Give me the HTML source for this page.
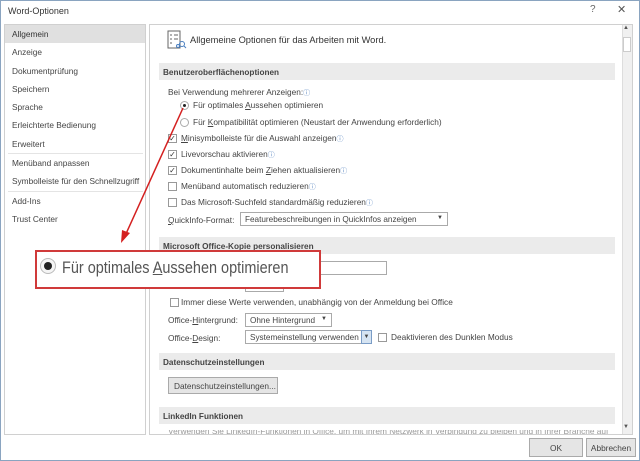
<!DOCTYPE html>
<html><head><meta charset="utf-8"><style>
*{margin:0;padding:0;box-sizing:border-box}
body{width:640px;height:461px;overflow:hidden;background:#fff;font-family:"Liberation Sans",sans-serif;font-size:8.3px;color:#444;position:relative}
.a{position:absolute;white-space:nowrap}
.frame{position:absolute;left:0;top:0;width:640px;height:461px;border:1px solid #8aa4c0}
.nav div.i{position:absolute;left:12px}
.hdr{position:absolute;left:159px;width:456px;height:17px;background:#ebebeb;font-weight:bold;font-size:8.2px;padding:5px 0 0 4px;color:#444}
.cb{position:absolute;width:9px;height:9px;border:1px solid #999;background:#fff;font-size:8px;line-height:7px;text-align:center;color:#333}
.sel{position:absolute;height:14px;border:1px solid #aaa;background:#fff;padding:2px 0 0 4px;font-size:8.2px}
.info{font-size:7px;color:#5a86c0}
</style></head><body>
<div class="frame"></div>
<div class="a" style="left:8px;top:6px;font-size:9px;color:#333">Word-Optionen</div>
<div class="a" style="left:590px;top:4px;font-size:10px;color:#666">?</div>
<div class="a" style="left:617px;top:3px;font-size:11px;color:#555">✕</div>
<div class="a" style="left:4px;top:24px;width:142px;height:411px;border:1px solid #d0d0d0;background:#fff"></div>
<div class="a" style="left:5px;top:25px;width:140px;height:18px;background:#e0e0e0"></div>
<div class="nav" style="position:absolute;left:0;top:0">
<div class="i a" style="top:29px;color:#333">Allgemein</div>
<div class="i a" style="top:47px">Anzeige</div>
<div class="i a" style="top:66px">Dokumentprüfung</div>
<div class="i a" style="top:84px">Speichern</div>
<div class="i a" style="top:102px">Sprache</div>
<div class="i a" style="top:120px">Erleichterte Bedienung</div>
<div class="i a" style="top:139px">Erweitert</div>
<div class="i a" style="top:158px">Menüband anpassen</div>
<div class="i a" style="top:176px">Symbolleiste für den Schnellzugriff</div>
<div class="i a" style="top:196px">Add-Ins</div>
<div class="i a" style="top:214px">Trust Center</div>
</div>
<div class="a" style="left:8px;top:153px;width:135px;height:1px;background:#e4e4e4"></div>
<div class="a" style="left:8px;top:191px;width:135px;height:1px;background:#e4e4e4"></div>
<div class="a" style="left:149px;top:24px;width:484px;height:411px;border:1px solid #d0d0d0"></div>
<div class="a" style="left:622px;top:25px;width:10px;height:409px;background:#f0f0f0;border-left:1px solid #ddd"></div>
<div class="a" style="left:623px;top:37px;width:8px;height:15px;background:#fff;border:1px solid #ccc"></div>
<div class="a" style="left:623px;top:25px;font-size:6px;color:#555">▲</div>
<div class="a" style="left:623px;top:424px;font-size:6px;color:#555">▼</div>
<svg class="a" style="left:167px;top:30px" width="20" height="22" viewBox="0 0 20 22"><rect x="1" y="1" width="12" height="17" fill="none" stroke="#666"/><path d="M3 5h2M7 5h4M3 9h2M7 9h4M3 13h2" stroke="#666"/><circle cx="15" cy="14" r="2.5" fill="none" stroke="#4a7fc0"/><path d="M17 16l2 2" stroke="#4a7fc0"/><circle cx="11" cy="16" r="1.5" fill="none" stroke="#4a7fc0"/></svg>
<div class="a" style="left:190px;top:35px;font-size:9.3px;color:#333">Allgemeine Optionen für das Arbeiten mit Word.</div>
<div class="hdr" style="top:63px">Benutzeroberflächenoptionen</div>
<div class="a" style="left:168px;top:87px">Bei Verwendung mehrerer Anzeigen:<span class="info">ⓘ</span></div>
<div class="a" style="left:180px;top:101px;width:9px;height:9px;border-radius:50%;border:1px solid #aaa;background:#fff"><div style="position:absolute;left:2px;top:2px;width:3px;height:3px;border-radius:50%;background:#222"></div></div>
<div class="a" style="left:193px;top:100px">Für optimales <u>A</u>ussehen optimieren</div>
<div class="a" style="left:180px;top:118px;width:9px;height:9px;border-radius:50%;border:1px solid #aaa;background:#fff"></div>
<div class="a" style="left:193px;top:117px">Für <u>K</u>ompatibilität optimieren (Neustart der Anwendung erforderlich)</div>
<div class="cb" style="left:168px;top:134px">✓</div><div class="a" style="left:181px;top:133px"><u>M</u>inisymbolleiste für die Auswahl anzeigen<span class="info">ⓘ</span></div>
<div class="cb" style="left:168px;top:150px">✓</div><div class="a" style="left:181px;top:149px">Livevorschau aktivieren<span class="info">ⓘ</span></div>
<div class="cb" style="left:168px;top:166px">✓</div><div class="a" style="left:181px;top:165px">Dokumentinhalte beim <u>Z</u>iehen aktualisieren<span class="info">ⓘ</span></div>
<div class="cb" style="left:168px;top:182px"></div><div class="a" style="left:181px;top:181px">Menüband automatisch reduzieren<span class="info">ⓘ</span></div>
<div class="cb" style="left:168px;top:198px"></div><div class="a" style="left:181px;top:197px">Das Microsoft-Suchfeld standardmäßig reduzieren<span class="info">ⓘ</span></div>
<div class="a" style="left:168px;top:215px"><u>Q</u>uickInfo-Format:</div>
<div class="sel" style="left:240px;top:212px;width:208px">Featurebeschreibungen in QuickInfos anzeigen<span style="position:absolute;right:4px;top:2px;font-size:6px">▼</span></div>
<div class="hdr" style="top:237px">Microsoft Office-Kopie personalisieren</div>
<div class="a" style="left:245px;top:261px;width:142px;height:14px;border:1px solid #aaa"></div>
<div class="a" style="left:245px;top:280px;width:39px;height:12px;border:1px solid #aaa"></div>
<div class="cb" style="left:170px;top:298px"></div><div class="a" style="left:181px;top:297px">Immer diese Werte verwenden, unabhängig von der Anmeldung bei Office</div>
<div class="a" style="left:168px;top:315px">Office-<u>H</u>intergrund:</div>
<div class="sel" style="left:245px;top:313px;width:87px">Ohne Hintergrund<span style="position:absolute;right:4px;top:2px;font-size:6px">▼</span></div>
<div class="a" style="left:168px;top:333px">Office-<u>D</u>esign:</div>
<div class="sel" style="left:245px;top:330px;width:127px">Systemeinstellung verwenden<span style="position:absolute;right:-1px;top:-1px;width:11px;height:14px;background:#d6e4f2;border:1px solid #7a9cc6;font-size:6px;text-align:center;line-height:12px">▼</span></div>
<div class="cb" style="left:378px;top:333px"></div><div class="a" style="left:391px;top:332px">Deaktivieren des Dunklen Modus</div>
<div class="hdr" style="top:353px">Datenschutzeinstellungen</div>
<div class="a" style="left:168px;top:377px;width:110px;height:17px;border:1px solid #aaa;background:#e5e5e5;padding:3px 0 0 5px">Datenschutzeinstellungen...</div>
<div class="hdr" style="top:407px">LinkedIn Funktionen</div>
<div class="a" style="left:168px;top:430px;height:4px;overflow:hidden;color:#999;line-height:2px">Verwenden Sie LinkedIn-Funktionen in Office, um mit Ihrem Netzwerk in Verbindung zu bleiben und in Ihrer Branche auf</div>
<div class="a" style="left:529px;top:438px;width:54px;height:19px;border:1px solid #aaa;background:#e5e5e5;text-align:center;padding-top:4px">OK</div>
<div class="a" style="left:586px;top:438px;width:50px;height:19px;border:1px solid #aaa;background:#e5e5e5;text-align:center;padding-top:4px">Abbrechen</div>
<svg class="a" style="left:0;top:0" width="640" height="461"><line x1="183" y1="108" x2="125" y2="236" stroke="#d42020" stroke-width="1.5"/><polygon points="121,243 122,230 130,233" fill="#d42020"/></svg>
<div class="a" style="left:35px;top:250px;width:286px;height:39px;border:2px solid #d03a3a;background:#fff"></div>
<div class="a" style="left:40px;top:258px;width:16px;height:16px;border-radius:50%;border:1px solid #bbb;background:#f5f5f5"><div style="position:absolute;left:3px;top:3px;width:8px;height:8px;border-radius:50%;background:#222"></div></div>
<div class="a" style="left:62px;top:258px;font-size:17px;color:#555;transform:scaleX(0.85);transform-origin:0 0">Für optimales <u>A</u>ussehen optimieren</div>
</body></html>
